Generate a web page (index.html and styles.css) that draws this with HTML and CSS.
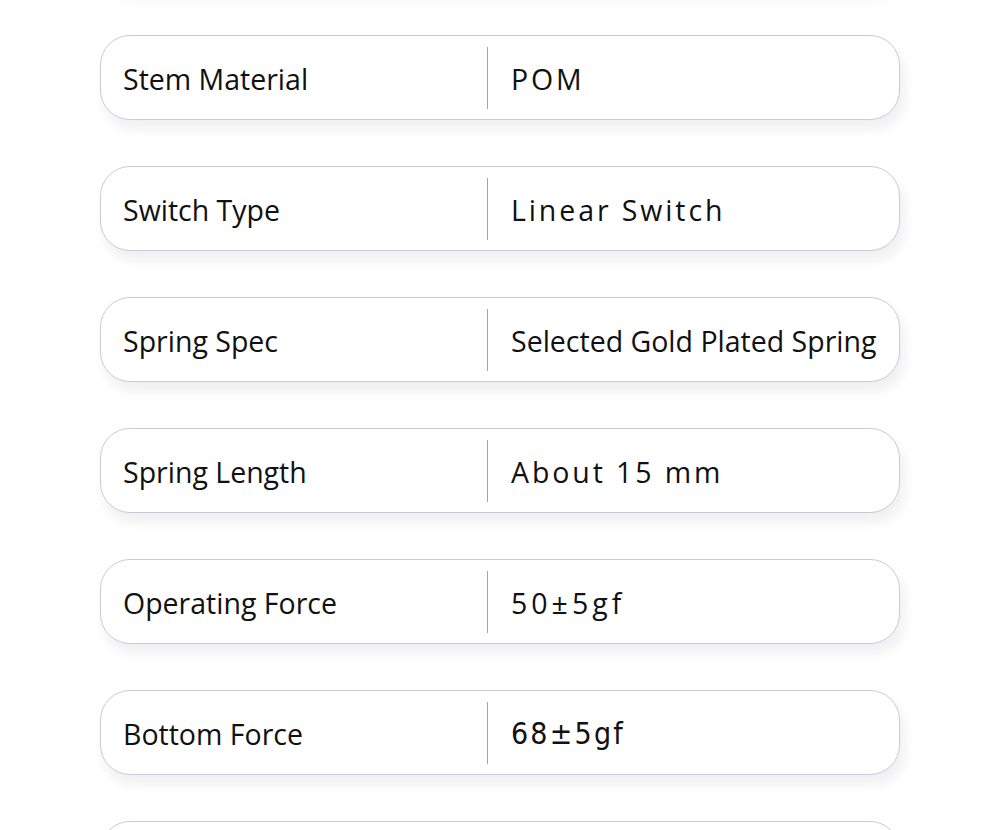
FILE: index.html
```html
<!DOCTYPE html>
<html lang="en">
<head>
<meta charset="utf-8">
<title>Switch Specs</title>
<link rel="stylesheet" href="styles.css">
</head>
<body>
<main class="specs">
  <div class="row row-partial" aria-hidden="true"></div>
  <div class="row"><div class="label">Stem Material</div><div class="divider"></div><div class="value spaced">POM</div></div>
  <div class="row"><div class="label">Switch Type</div><div class="divider"></div><div class="value spaced">Linear Switch</div></div>
  <div class="row"><div class="label">Spring Spec</div><div class="divider"></div><div class="value">Selected Gold Plated Spring</div></div>
  <div class="row"><div class="label">Spring Length</div><div class="divider"></div><div class="value spaced">About 15 mm</div></div>
  <div class="row"><div class="label">Operating Force</div><div class="divider"></div><div class="value spaced wide">50±5gf</div></div>
  <div class="row"><div class="label">Bottom Force</div><div class="divider"></div><div class="value narrow">68±5gf</div></div>
  <div class="row row-partial" aria-hidden="true"></div>
</main>
</body>
</html>
```
FILE: styles.css
```css
html, body {
  margin: 0;
  padding: 0;
  background: #ffffff;
  overflow: hidden;
}
body {
  font-family: "Open Sans", "Noto Sans", sans-serif;
  color: #111;
}
.specs {
  width: 800px;
  margin: -96px 0 0 100px;
  display: flex;
  flex-direction: column;
  gap: 46px;
}
.row {
  box-sizing: border-box;
  height: 85px;
  flex: none;
  border: 1px solid #cdc9d8;
  border-radius: 30px;
  background: #fff;
  box-shadow: 4px 9px 12px rgba(40, 30, 60, 0.07);
  display: grid;
  grid-template-columns: 386px 1px 1fr;
  align-items: center;
}
.label {
  padding-left: 22px;
  padding-top: 2px;
  font-size: 28.5px;
}
.divider {
  height: 62px;
  background: #a99fb3;
}
.value {
  padding-left: 23px;
  padding-top: 2px;
  font-size: 28.5px;
  white-space: nowrap;
}
.value.spaced {
  letter-spacing: 2.9px;
}
.value.spaced.wide {
  letter-spacing: 4px;
}
.value.narrow {
  font-family: "DejaVu Sans Condensed", "Liberation Sans", sans-serif;
  font-stretch: condensed;
  letter-spacing: 2.2px;
  font-size: 30px;
}
```
